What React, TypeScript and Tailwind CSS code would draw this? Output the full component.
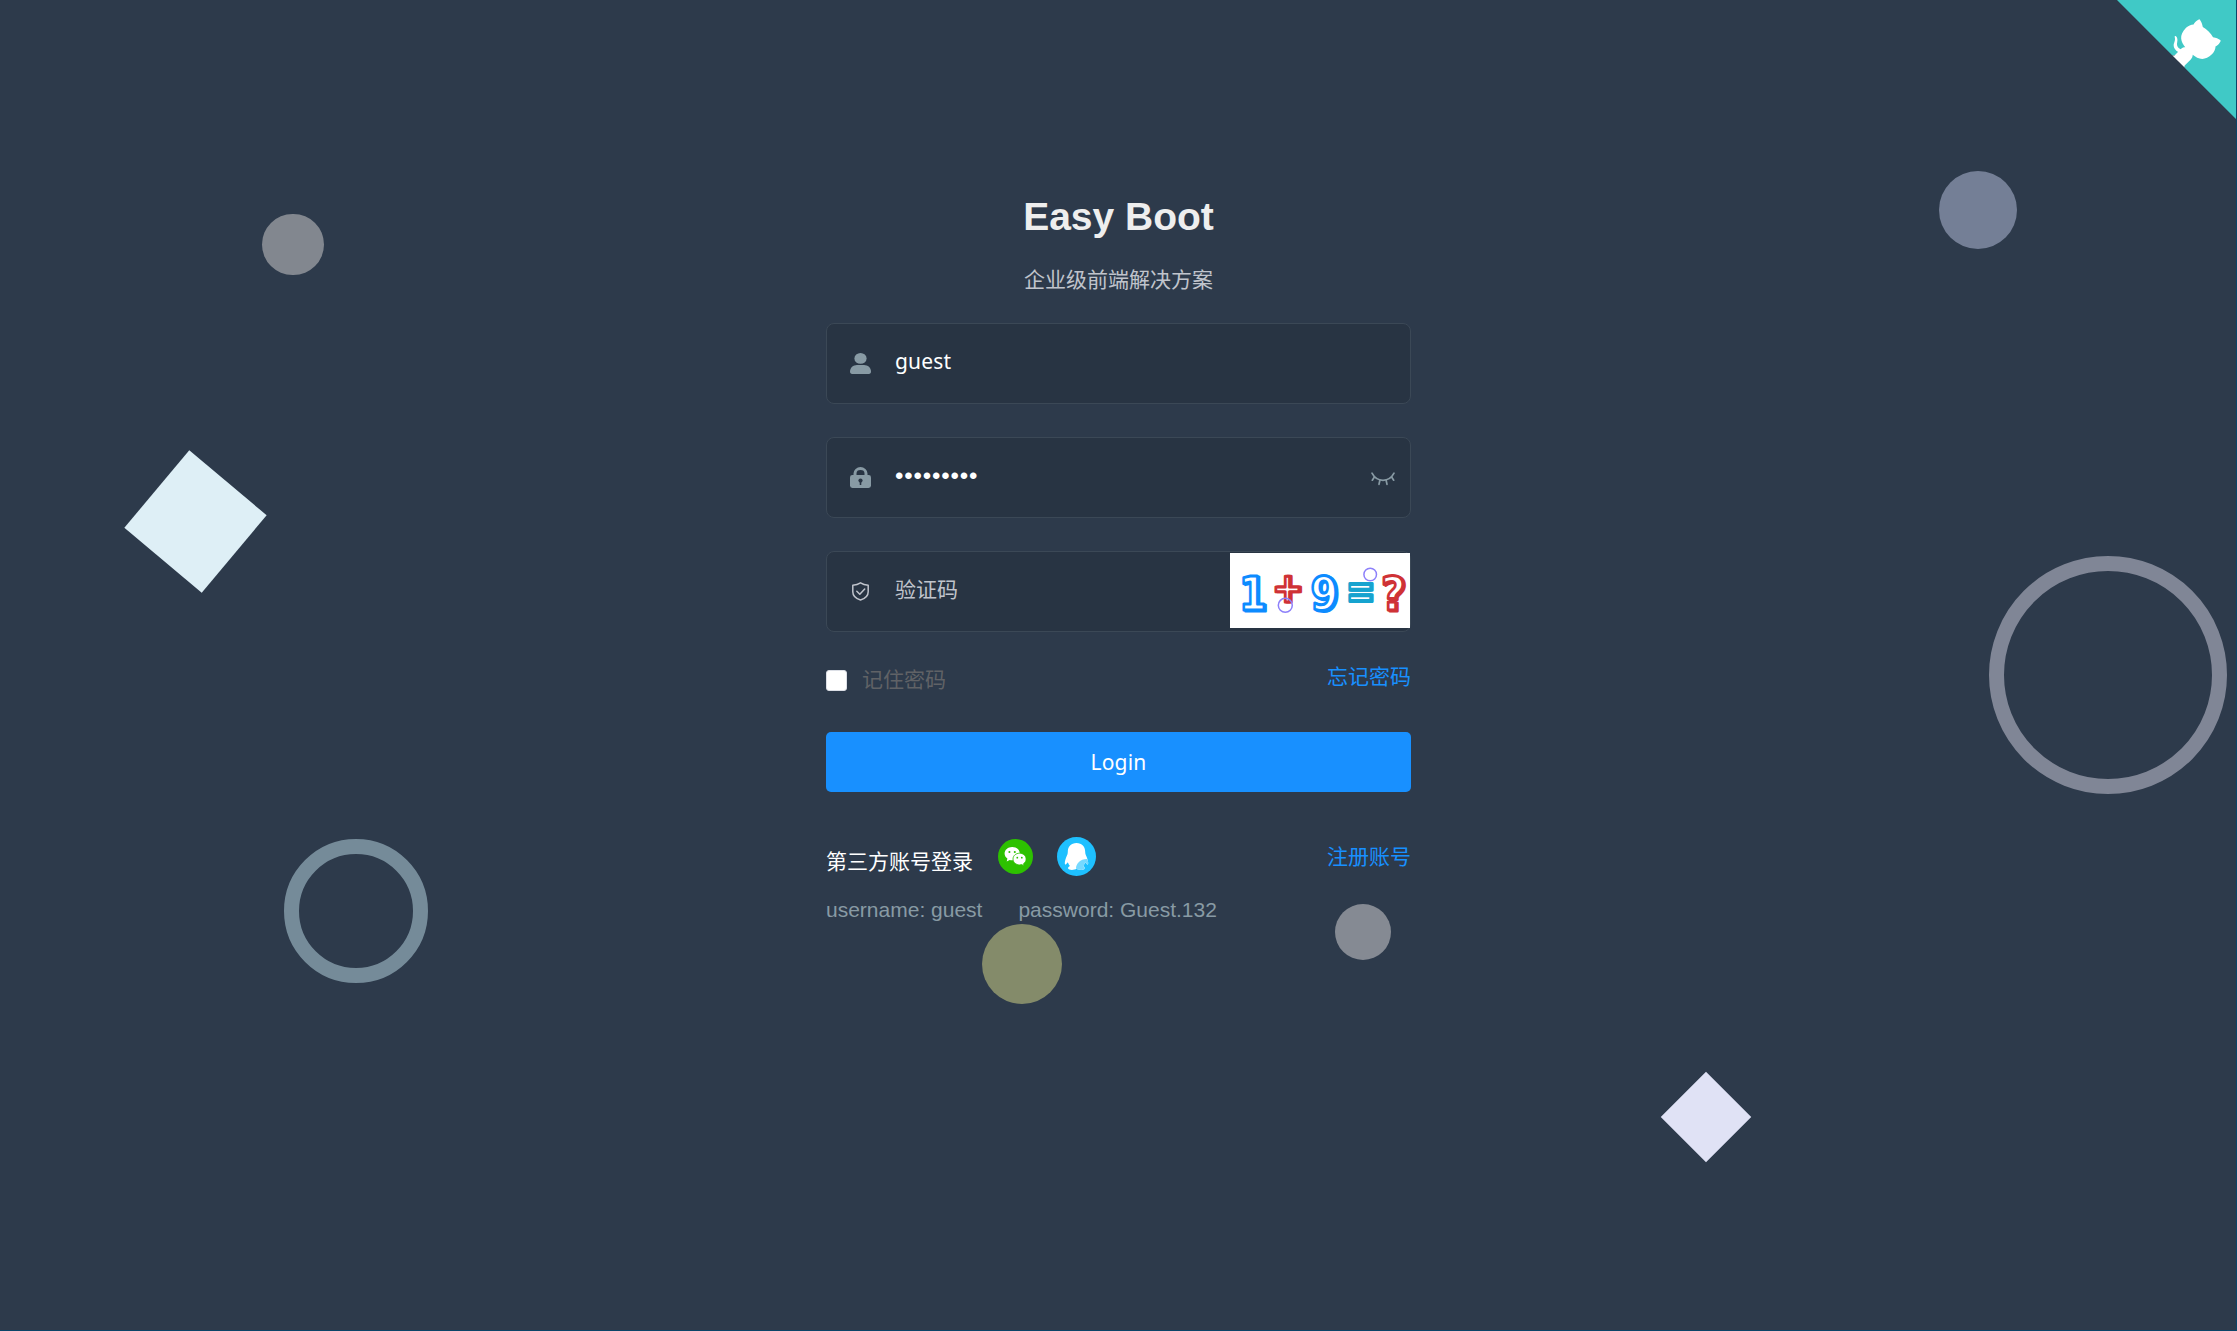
import type { ReactNode } from 'react';

const cjk = "font-['Noto_Sans','Noto_Sans_CJK_SC',sans-serif]";

function GithubCorner() {
  return (
    <svg viewBox="0 0 250 250" className="absolute top-0 right-[-1px] size-[120px] fill-[#40c9c6] text-white" aria-hidden="true">
      <path d="M0,0 L115,115 L130,115 L142,142 L250,250 L250,0 Z" />
      <path
        fill="currentColor"
        d="M128.3,109.0 C113.8,99.7 119.0,89.6 119.0,89.6 C122.0,82.7 120.5,78.6 120.5,78.6 C119.2,72.0 123.4,76.3 123.4,76.3 C127.3,80.9 125.5,87.3 125.5,87.3 C122.9,97.6 130.6,101.9 134.4,103.2"
      />
      <path
        fill="currentColor"
        d="M115.0,115.0 C114.9,115.1 118.7,116.5 119.8,115.4 L133.7,101.6 C136.9,99.2 139.9,98.4 142.2,98.6 C133.8,88.0 127.5,74.4 143.8,58.0 C148.5,53.4 154.0,51.2 159.7,51.0 C160.3,49.4 163.2,43.6 171.4,40.1 C171.4,40.1 176.1,42.5 178.8,56.2 C183.1,58.6 187.2,61.8 190.9,65.4 C194.5,69.0 197.7,73.2 200.1,77.6 C213.8,80.2 216.3,84.9 216.3,84.9 C212.7,93.1 206.9,96.0 205.4,96.6 C205.1,102.4 203.0,107.8 198.3,112.5 C181.9,128.9 168.3,122.5 157.7,114.1 C157.9,116.9 156.7,120.9 152.7,124.9 L141.0,136.5 C139.8,137.7 141.6,141.9 141.8,141.8 Z"
      />
    </svg>
  );
}

/* Decorative shapes floating freely over the backdrop. */
function Shapes() {
  return (
    <div className="pointer-events-none absolute inset-0" aria-hidden="true">
      <i className="absolute top-[213.5px] left-[262.3px] size-[61.5px] rounded-full bg-[#82878f]" />
      <i className="absolute top-[170.5px] left-[1938.5px] size-[78.5px] rounded-full bg-[#747f96]" />
      <i className="absolute top-[471px] left-[145px] size-[101px] rotate-40 bg-[#deeff6]" />
      <i className="absolute top-[555.5px] left-[1989px] size-[238px] rounded-full border-[15.5px] border-[#808696]" />
      <i className="absolute top-[838.5px] left-[283.8px] size-[144.5px] rounded-full border-[15.5px] border-[#758b99]" />
      <i className="absolute top-[924px] left-[982.4px] size-[80px] rounded-full bg-[#848b6a]" />
      <i className="absolute top-[904px] left-[1335.2px] size-[55.5px] rounded-full bg-[#858a93]" />
      <i className="absolute top-[1085px] left-[1674px] size-[64px] rotate-45 bg-[#e0e2f5]" />
    </div>
  );
}

function UserIcon() {
  return (
    <svg viewBox="0 0 21 21" className="size-[21px] fill-[#889aa4]">
      <ellipse cx="10.5" cy="5.4" rx="6.1" ry="5.4" />
      <path d="M0 18.6C0 14.8 3.2 12 7 12h7c3.800 0 7 2.800 7 6.600 0 1.600-.7 2.400-2.200 2.400H2.200C.7 21 0 20.200 0 18.600Z" />
    </svg>
  );
}

function LockIcon() {
  return (
    <svg viewBox="0 0 21 21" className="size-[21px]">
      <path d="M5 8V6.500a5.500 4.900 0 0 1 11 0V8" fill="none" stroke="#889aa4" strokeWidth="3" />
      <rect y="8" width="21" height="13" rx="2.400" fill="#889aa4" />
      <circle cx="10.500" cy="13.600" r="2.100" fill="#283443" />
      <path d="M10.500 14v4" stroke="#283443" strokeWidth="1.600" />
    </svg>
  );
}

function ShieldIcon() {
  return (
    <svg viewBox="0 0 21 21" className="size-[21px]" fill="none" stroke="#c0c4cc" strokeWidth="1.500" strokeLinejoin="round" strokeLinecap="round">
      <path d="M10.500 1.800C8 3.500 5.500 4.100 2.800 4.300v6.400c0 4 3 6.800 7.700 8.300 4.700-1.500 7.700-4.300 7.700-8.300V4.300C15.500 4.100 13 3.500 10.500 1.800Z" />
      <path d="m6.800 10.300 3 3 4.900-5.300" />
    </svg>
  );
}

function ClosedEyeIcon() {
  return (
    <svg viewBox="0 0 24 14" className="h-[14px] w-[24px]" fill="none" stroke="#889aa4" strokeWidth="1.700" strokeLinecap="round">
      <path d="M1 1.200C3.300 5.600 7.200 8.300 12 8.300S20.700 5.600 23 1.200" />
      <path d="M3.400 5 1.300 8.200M8.900 8.300 8 12.300M15.100 8.300l.9 4M20.600 5l2.100 3.200" />
    </svg>
  );
}

function WechatIcon() {
  return (
    <svg viewBox="0 0 35 35" className="size-[35px]">
      <circle cx="17.500" cy="17.500" r="17.500" fill="#2dc100" />
      <g fill="#fff">
        <path d="M14.200 8C10 8 6.600 10.900 6.600 14.500c0 2.100 1.100 3.900 2.800 5.100l-.7 2.900 3-1.500c.8.200 1.600.3 2.500.3 4.300 0 7.600-3.100 7.600-6.800S18.400 8 14.200 8Z" />
        <path d="M21.600 14.200c-3.800 0-6.600 2.600-6.600 5.800s2.900 5.900 6.600 5.900c.8 0 1.500-.1 2.200-.3l2.200 1.300-.5-2.200c1.600-1.100 2.600-2.800 2.600-4.700 0-3.200-2.900-5.800-6.500-5.800Z" stroke="#2dc100" strokeWidth=".8" />
      </g>
      <g fill="#2dc100">
        <circle cx="11.400" cy="13" r="1.050" />
        <circle cx="16.800" cy="13" r="1.050" />
        <circle cx="19.300" cy="18.700" r=".9" />
        <circle cx="23.800" cy="18.700" r=".9" />
      </g>
    </svg>
  );
}

function QqIcon() {
  return (
    <svg viewBox="0 0 39 39" className="size-[39px]">
      <defs>
        <clipPath id="penguin">
          <path d="M19.500 6C14 6 10.800 9.700 10.800 14.700c0 1.200-.1 2.100-.5 3.100-1.500 3.300-2.600 6.200-2.500 8.500.1 1.600.7 1.500 1.500.7l1.600-1.800c.4 1.500 1 2.700 2 3.800-1.300.6-2.100 1.400-1.800 2.600.6 1.900 6.600 1.700 8.400.2 1.800 1.500 7.800 1.700 8.400-.2.300-1.200-.5-2-1.800-2.600 1-1.100 1.600-2.300 2-3.800l1.600 1.800c.8.8 1.400.9 1.500-.7.100-2.300-1-5.200-2.500-8.500-.4-1-.5-1.900-.5-3.100C28.200 9.700 25 6 19.500 6Z" />
        </clipPath>
      </defs>
      <circle cx="19.500" cy="19.500" r="19.500" fill="#1ec0ff" />
      <g clipPath="url(#penguin)">
        <path fill="#fff" d="M0 0h39v39H0z" />
        <path fill="#76d9ff" d="M39 22H30C23 22 19 27 19 31c0 2 2 4 4 5h16Z" />
      </g>
    </svg>
  );
}

const symbols = [
  { text: '1', color: '#0d8bff', place: 'translate(9 57) scale(.84 1)', size: 47 },
  { text: '+', color: '#cf3236', place: 'translate(42 48.500) scale(.92 1)', size: 40 },
  { text: '9', color: '#0d8bff', place: 'translate(80.500 57) scale(.84 1)', size: 47 },
  { text: '=', color: '#16a3cf', place: 'translate(116 54.500) scale(.88 1.300)', size: 38 },
  { text: '?', color: '#cf3236', place: 'translate(151 57) scale(.9 1)', size: 47 },
];

function Captcha() {
  return (
    <svg viewBox="0 0 180 75" className="h-[75px] w-[180px] shrink-0 bg-white font-['DejaVu_Sans',sans-serif] font-bold">
      {symbols.map((s) => (
        <g key={s.text} transform={s.place} fontSize={s.size} strokeLinejoin="round">
          <text x="2" y=".6" fill={s.color} stroke={s.color} strokeWidth="3" aria-hidden="true">{s.text}</text>
          <text fill="#fff" stroke={s.color} strokeWidth="3">{s.text}</text>
        </g>
      ))}
      <g fill="none" stroke="#8d80fa" strokeWidth="1.500">
        <circle cx="140.200" cy="21.500" r="6.300" />
        <circle cx="55.300" cy="52.300" r="7" />
      </g>
    </svg>
  );
}

function Field({ icon, children }: { icon: ReactNode; children: ReactNode }) {
  return (
    <div className="flex h-[81px] items-center rounded-[8px] border border-[#3b4856] bg-[#283443] pl-[23px]">
      {icon}
      {children}
    </div>
  );
}

export default function App() {
  return (
    <div className={`relative h-[1331px] w-full overflow-hidden border-r border-b border-[#0b4568] bg-[#2d3a4b] text-[21px] ${cjk}`}>
      <Shapes />
      <GithubCorner />
      <main className="relative mx-auto flex w-[586px] flex-col pt-[193px] pl-px">
        <h1 className="text-center font-['Liberation_Sans',sans-serif] text-[39px] leading-[48px] font-bold text-[#eeeeee]">Easy Boot</h1>
        <p className="mt-[23px] text-center leading-[30px] text-[#c0c4cc]">企业级前端解决方案</p>

        <form className="mt-[29px] flex flex-col gap-[33px]">
          <Field icon={<UserIcon />}>
            <span className="mb-[3px] ml-[24px] tracking-[0.2px] text-white">guest</span>
          </Field>
          <Field icon={<LockIcon />}>
            <span className="mb-[3px] ml-[24px] font-['Liberation_Sans',sans-serif] text-[24px] tracking-[0.85px] text-white">•••••••••</span>
            <span className="mt-[2px] mr-[15px] ml-auto"><ClosedEyeIcon /></span>
          </Field>
          <Field icon={<ShieldIcon />}>
            <span className="mb-[4px] ml-[24px] text-[#c0c4cc]">验证码</span>
            <span className="mb-[2px] ml-auto flex"><Captcha /></span>
          </Field>
        </form>

        <div className="mt-[29px] flex h-[38px] items-start justify-between">
          <label className="mt-[3px] flex items-center leading-[30px] text-[#606266]">
            <i className="mr-[15px] size-[21px] rounded-[3px] border border-[#dcdfe6] bg-white" />
            <span className="mb-[2px]">记住密码</span>
          </label>
          <a className="leading-[30px] text-[#1890ff]">忘记密码</a>
        </div>

        <button type="button" className="mt-[33px] flex h-[60px] items-center justify-center rounded-[5px] bg-[#1890ff] pt-[2px] tracking-[0.2px] text-white">Login</button>

        <div className="mt-[45px] flex h-[39px] items-center">
          <span className="mt-[9px] leading-[30px] text-white">第三方账号登录</span>
          <span className="ml-[25px]"><WechatIcon /></span>
          <span className="ml-[24px]"><QqIcon /></span>
          <a className="mb-[2px] ml-auto leading-[30px] text-[#1890ff]">注册账号</a>
        </div>
        <p className="mt-[19px] flex gap-[36px] font-['Liberation_Sans',sans-serif] leading-[30px] text-[#889aa4]">
          <span>username: guest</span>
          <span>password: Guest.132</span>
        </p>
      </main>
    </div>
  );
}
